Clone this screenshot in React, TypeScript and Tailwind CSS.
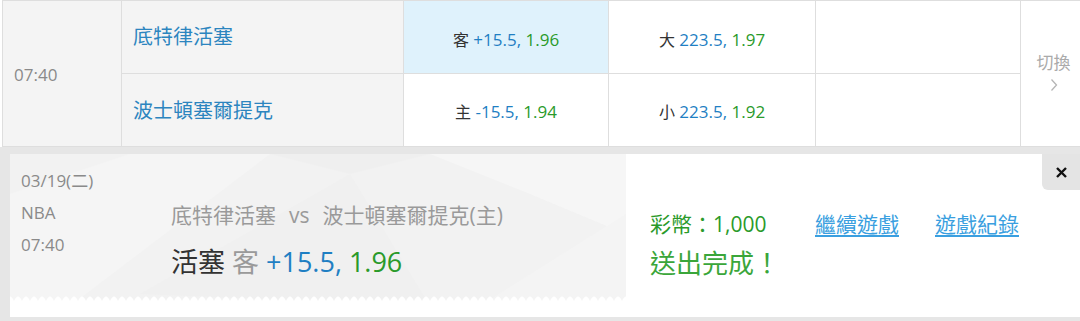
import React from "react";

const font = { fontFamily: '"Open Sans", "Noto Sans CJK TC", sans-serif' };

function Odds({ label, a, b }: { label: string; a: string; b: string }) {
  return (
    <span className="text-[17px]">
      <span className="text-[#333] text-[16px]">{label}</span>{" "}
      <span className="text-[#1f7fc3]">{a}</span>{" "}
      <span className="text-[#2a9a2a]">{b}</span>
    </span>
  );
}

export default function App() {
  return (
    <div className="w-[1080px] h-[321px] bg-white overflow-hidden" style={font}>
      <div className="pl-[2px]">
        <div className="grid grid-cols-[119px_282px_205px_207px_205px_59px] grid-rows-[73px_73px] border-t border-l border-[#dedede] bg-white">
          <div className="row-span-2 bg-[#f4f4f4] border-r border-b border-[#dedede] flex items-center pl-[11px] pt-[2px] text-[17px] text-[#8a8a8a]">
            07:40
          </div>
          <div className="bg-[#f4f4f4] border-r border-b border-[#dedede] flex items-center pl-[11px] pb-[1px] text-[20px] text-[#2c85bf]">
            底特律活塞
          </div>
          <div className="bg-[#dff2fc] border-r border-b border-[#dedede] flex items-center justify-center pt-[5px]">
            <Odds label="客" a="+15.5," b="1.96" />
          </div>
          <div className="border-r border-b border-[#dedede] flex items-center justify-center pt-[5px]">
            <Odds label="大" a="223.5," b="1.97" />
          </div>
          <div className="border-r border-b border-[#dedede]" />
          <div className="row-span-2 border-b border-[#dedede] flex flex-col items-center justify-center pb-[3px] pl-[6px] text-[#aaa]">
            <span className="text-[17px] leading-[20px]">切換</span>
            <svg width="8" height="14" viewBox="0 0 8 14" className="mt-[5px]">
              <path d="M1.5 1.5 L6.5 7 L1.5 12.5" fill="none" stroke="#b5b5b5" strokeWidth="1.3" />
            </svg>
          </div>
          <div className="bg-[#f4f4f4] border-r border-b border-[#dedede] flex items-center pl-[11px] pt-[2px] text-[20px] text-[#2c85bf]">
            波士頓塞爾提克
          </div>
          <div className="border-r border-b border-[#dedede] flex items-center justify-center pt-[3px]">
            <Odds label="主" a="-15.5," b="1.94" />
          </div>
          <div className="border-r border-b border-[#dedede] flex items-center justify-center pt-[3px]">
            <Odds label="小" a="223.5," b="1.92" />
          </div>
          <div className="border-r border-b border-[#dedede]" />
        </div>
      </div>

      <div className="bg-[#e6e6e6] pt-[7px] pl-[10px] pb-[5px] h-[175px]">
        <div className="relative bg-white h-[163px] flex">
          <div className="relative w-[616px] h-[152px] bg-[#f2f2f2] overflow-hidden">
            <svg className="absolute inset-0" width="616" height="152" viewBox="0 0 616 152">
              <polygon points="0,40 120,0 260,0 60,152 0,152" fill="#f5f5f5" />
              <polygon points="130,140 340,20 420,152" fill="#f0f0f0" />
              <polygon points="420,0 616,0 616,80 520,40" fill="#f6f6f6" />
              <polygon points="470,152 616,60 616,152" fill="#f4f4f4" />
              <polygon points="260,0 420,0 340,20" fill="#efefef" />
              <defs>
                <pattern id="scallop" width="16" height="14" patternUnits="userSpaceOnUse" x="4" y="138">
                  <path d="M0 14 L0 9 Q4 0 8 9 Q12 0 16 9 L16 14 Z" fill="#ffffff" />
                </pattern>
              </defs>
              <rect x="0" y="138" width="616" height="14" fill="url(#scallop)" />
            </svg>
            <div className="relative flex">
              <div className="w-[161px] pl-[11px] pt-[11px] text-[17px] text-[#8a8a8a] leading-[32px]">
                <div>03/19(二)</div>
                <div>NBA</div>
                <div>07:40</div>
              </div>
              <div className="pt-[47px]">
                <div className="text-[21px] text-[#9a9a9a] leading-[28px]">
                  底特律活塞<span className="mx-[13px]">vs</span>波士頓塞爾提克(主)
                </div>
                <div className="text-[27px] leading-[36px] mt-[15px]">
                  <span className="text-[#333]">活塞</span> <span className="text-[#9a9a9a]">客</span>{" "}
                  <span className="text-[#1f7fc3]">+15.5,</span> <span className="text-[#2a9a2a]">1.96</span>
                </div>
              </div>
            </div>
          </div>
          <div className="flex items-start pt-[56px] pl-[24px]">
            <div className="w-[165px]">
              <div className="text-[21px] leading-[28px] text-[#2a9a2a]">彩幣：1,000</div>
              <div className="text-[26px] leading-[34px] mt-[8px] text-[#3aa63a]">送出完成！</div>
            </div>
            <a className="text-[21px] leading-[28px] text-[#3a9fe0] underline underline-offset-[3px]">繼續遊戲</a>
            <a className="ml-[36px] text-[21px] leading-[28px] text-[#3a9fe0] underline underline-offset-[3px]">遊戲紀錄</a>
          </div>
          <div className="absolute right-0 top-0 w-[38px] h-[36px] bg-[#e4e4e4] rounded-bl-[6px] flex items-center justify-center">
            <svg width="13" height="13" viewBox="0 0 13 13">
              <path d="M2 2 L11 11 M11 2 L2 11" stroke="#111" strokeWidth="2.4" />
            </svg>
          </div>
        </div>
      </div>
    </div>
  );
}
